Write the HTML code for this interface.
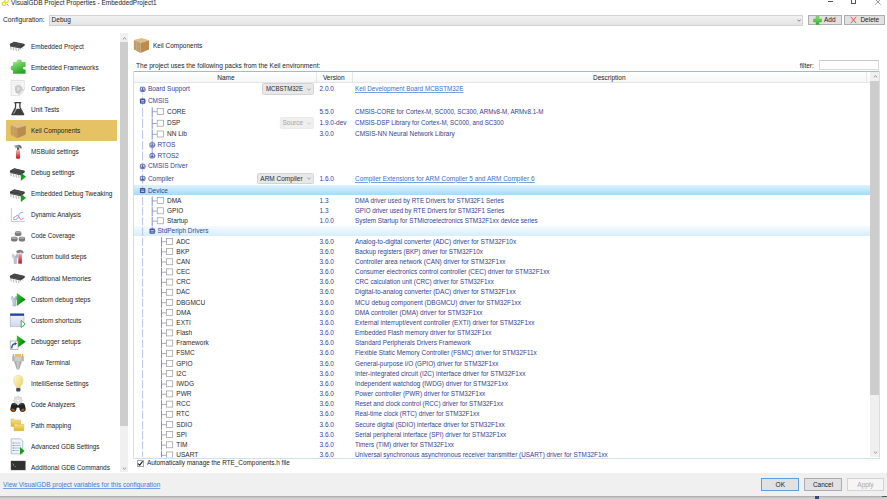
<!DOCTYPE html><html><head><meta charset="utf-8"><style>
html,body{margin:0;padding:0;width:887px;height:499px;overflow:hidden;background:#fff}
body{position:relative;font-family:"Liberation Sans",sans-serif;font-size:6.5px}
.t{position:absolute;white-space:pre;line-height:10px;}
.r{position:absolute}
.ic{position:absolute;width:16px;height:12px}
.exp{position:absolute;width:5.4px;height:5.4px;background:#3d4f95;border-radius:0.8px}
.exp .h{position:absolute;left:1.2px;top:2.3px;width:3px;height:0.9px;background:#fff}
.exp .v{position:absolute;left:2.25px;top:1.2px;width:0.9px;height:3px;background:#fff}
</style></head><body>
<svg class="r" style="left:0;top:0" width="12" height="8" viewBox="0 0 12 8"><circle cx="3.9" cy="3.9" r="1.7" fill="none" stroke="#e6d92e" stroke-width="1.2"/><circle cx="6.6" cy="0.9" r="1.7" fill="none" stroke="#e6d92e" stroke-width="1.2"/><path d="M7 4.2 L8.6 5.6" stroke="#6a6a6a" stroke-width="0.8"/></svg>
<div class="t" style="left:11px;top:-2.3px;color:#222;transform:scaleX(0.9959);transform-origin:0 0;">VisualGDB Project Properties - EmbeddedProject1</div>
<div class="r" style="left:828px;top:1.2px;width:5px;height:0.7px;background:#555"></div>
<div class="r" style="left:851.2px;top:-1px;width:5px;height:5.4px;border:0.7px solid #555;box-sizing:border-box"></div>
<svg class="r" style="left:875px;top:-1px" width="6" height="6" viewBox="0 0 6 6"><path d="M0.2 0.2L5.6 5.6M5.6 0.2L0.2 5.6" stroke="#555" stroke-width="0.65"/></svg>
<div class="t" style="left:2.5px;top:15px;color:#222;transform:scaleX(1.0251);transform-origin:0 0;">Configuration:</div>
<div class="r" style="left:49.1px;top:14.8px;width:753.7px;height:10.8px;border:1px solid #d2d2d2;box-sizing:border-box;background:linear-gradient(#f1f1f1,#e4e4e4)"></div>
<div class="t" style="left:51.6px;top:15px;color:#222;">Debug</div>
<svg class="r" style="left:797px;top:19px" width="4" height="3" viewBox="0 0 4 3"><path d="M0.3 0.5L2 2.3L3.7 0.5" stroke="#555" stroke-width="0.7" fill="none"/></svg>
<div class="r" style="left:808px;top:15px;width:34px;height:10px;border:1px solid #adadad;box-sizing:border-box;background:#e1e1e1"></div>
<svg class="r" style="left:813px;top:16px" width="9" height="9" viewBox="0 0 9 9"><defs><linearGradient id="gadd" x1="0" y1="0" x2="0" y2="1"><stop offset="0" stop-color="#8fe07a"/><stop offset="1" stop-color="#2fae2a"/></linearGradient></defs><path d="M3 0.5h3v2.5h2.5v3h-2.5v2.5h-3v-2.5h-2.5v-3h2.5z" fill="url(#gadd)" stroke="#3aa73a" stroke-width="0.4" stroke-linejoin="round"/></svg>
<div class="t" style="left:824px;top:15px;color:#222;">Add</div>
<div class="r" style="left:844px;top:15px;width:41px;height:10px;border:1px solid #adadad;box-sizing:border-box;background:#e1e1e1"></div>
<svg class="r" style="left:850px;top:16px" width="7" height="8" viewBox="0 0 7 8"><path d="M0.8 0.8L6.2 7.2M6.2 0.8L0.8 7.2" stroke="#ea4b35" stroke-width="0.9"/></svg>
<div class="t" style="left:860.4px;top:15px;color:#222;">Delete</div>
<div class="t" style="left:31.2px;top:41.9px;color:#222;transform:scaleX(0.9891);transform-origin:0 0;">Embedded Project</div>
<div class="t" style="left:31.2px;top:62.900000000000006px;color:#222;transform:scaleX(0.9797);transform-origin:0 0;">Embedded Frameworks</div>
<div class="t" style="left:31.2px;top:84.0px;color:#222;transform:scaleX(0.9944);transform-origin:0 0;">Configuration Files</div>
<div class="t" style="left:31.2px;top:105.0px;color:#222;transform:scaleX(0.9957);transform-origin:0 0;">Unit Tests</div>
<div class="r" style="left:6px;top:120.2px;width:111px;height:21px;background:#e5c365"></div>
<div class="t" style="left:31.2px;top:126.1px;color:#222;transform:scaleX(0.996);transform-origin:0 0;">Keil Components</div>
<div class="t" style="left:31.2px;top:147.2px;color:#222;transform:scaleX(0.9872);transform-origin:0 0;">MSBuild settings</div>
<div class="t" style="left:31.2px;top:168.2px;color:#222;transform:scaleX(1.0052);transform-origin:0 0;">Debug settings</div>
<div class="t" style="left:31.2px;top:189.2px;color:#222;transform:scaleX(0.998);transform-origin:0 0;">Embedded Debug Tweaking</div>
<div class="t" style="left:31.2px;top:210.3px;color:#222;transform:scaleX(0.9796);transform-origin:0 0;">Dynamic Analysis</div>
<div class="t" style="left:31.2px;top:231.3px;color:#222;transform:scaleX(0.9664);transform-origin:0 0;">Code Coverage</div>
<div class="t" style="left:31.2px;top:252.39999999999998px;color:#222;transform:scaleX(1.0058);transform-origin:0 0;">Custom build steps</div>
<div class="t" style="left:31.2px;top:273.5px;color:#222;transform:scaleX(1.0222);transform-origin:0 0;">Additional Memories</div>
<div class="t" style="left:31.2px;top:294.5px;color:#222;transform:scaleX(0.9962);transform-origin:0 0;">Custom debug steps</div>
<div class="t" style="left:31.2px;top:315.6px;color:#222;transform:scaleX(0.9945);transform-origin:0 0;">Custom shortcuts</div>
<div class="t" style="left:31.2px;top:336.6px;color:#222;transform:scaleX(1.0037);transform-origin:0 0;">Debugger setups</div>
<div class="t" style="left:31.2px;top:357.7px;color:#222;transform:scaleX(0.9907);transform-origin:0 0;">Raw Terminal</div>
<div class="t" style="left:31.2px;top:378.7px;color:#222;transform:scaleX(0.9778);transform-origin:0 0;">IntelliSense Settings</div>
<div class="t" style="left:31.2px;top:399.8px;color:#222;transform:scaleX(0.9708);transform-origin:0 0;">Code Analyzers</div>
<div class="t" style="left:31.2px;top:420.8px;color:#222;transform:scaleX(0.9994);transform-origin:0 0;">Path mapping</div>
<div class="t" style="left:31.2px;top:441.9px;color:#222;transform:scaleX(0.9756);transform-origin:0 0;">Advanced GDB Settings</div>
<div class="t" style="left:31.2px;top:462.9px;color:#222;transform:scaleX(0.9926);transform-origin:0 0;">Additional GDB Commands</div>
<div class="r" style="left:119.7px;top:33.1px;width:8.2px;height:439.4px;background:#f0f0f0"></div>
<div class="r" style="left:119.7px;top:41.8px;width:8.2px;height:384.4px;background:#cdcdcd"></div>
<svg class="r" style="left:121.5px;top:36.5px" width="5" height="3" viewBox="0 0 5 3"><path d="M0.8 2.4L2.5 0.8L4.2 2.4" stroke="#7a7a7a" stroke-width="0.8" fill="none"/></svg>
<svg class="r" style="left:121.5px;top:466.5px" width="5" height="3" viewBox="0 0 5 3"><path d="M0.8 0.6L2.5 2.2L4.2 0.6" stroke="#7a7a7a" stroke-width="0.8" fill="none"/></svg>
<div class="t" style="left:152.6px;top:41.1px;color:#222;transform:scaleX(0.996);transform-origin:0 0;">Keil Components</div>
<div class="t" style="left:136.4px;top:60.900000000000006px;color:#222;transform:scaleX(1.0101);transform-origin:0 0;">The project uses the following packs from the Keil environment:</div>
<div class="t" style="left:799.7px;top:60.7px;color:#222;">filter:</div>
<div class="r" style="left:819.2px;top:59.6px;width:60.3px;height:10.8px;border:1px solid #dadada;border-top-color:#c8c8c8;box-sizing:border-box;background:#fff"></div>
<div class="r" style="left:133.4px;top:71.0px;width:746.2px;height:387.6px;border:1px solid #cfe0ef;border-top-color:#9fbad6;border-radius:1.5px;box-sizing:border-box;background:#fff"></div>
<div class="r" style="left:134.4px;top:72.0px;width:735.8px;height:10.7px;background:linear-gradient(#ffffff,#f6f7f8);border-bottom:1px solid #e6e6e6;box-sizing:border-box"></div>
<div class="r" style="left:316.3px;top:72.4px;width:0.8px;height:10px;background:#e6e6e6"></div>
<div class="r" style="left:351.5px;top:72.4px;width:0.8px;height:10px;background:#e6e6e6"></div>
<div class="r" style="left:865.9px;top:72.4px;width:0.8px;height:10px;background:#e6e6e6"></div>
<div class="t" style="left:217.3px;top:72.7px;color:#222;">Name</div>
<div class="t" style="left:322.9px;top:72.7px;color:#222;">Version</div>
<div class="t" style="left:593px;top:72.7px;color:#222;">Description</div>
<div class="r" style="left:870.2px;top:72.4px;width:8.6px;height:384.6px;background:#f0f0f0"></div>
<div class="r" style="left:870.2px;top:81px;width:8.6px;height:314px;background:#cdcdcd"></div>
<svg class="r" style="left:872.5px;top:75px" width="5" height="3" viewBox="0 0 5 3"><path d="M0.8 2.4L2.5 0.8L4.2 2.4" stroke="#7a7a7a" stroke-width="0.8" fill="none"/></svg>
<svg class="r" style="left:872.5px;top:451px" width="5" height="3" viewBox="0 0 5 3"><path d="M0.8 0.6L2.5 2.2L4.2 0.6" stroke="#7a7a7a" stroke-width="0.8" fill="none"/></svg>
<div class="r" style="left:134.4px;top:184.7px;width:735.8px;height:10.4px;background:linear-gradient(#def3fd,#a2daf8)"></div>
<div class="r" style="left:134.4px;top:225.8px;width:735.8px;height:10.6px;background:linear-gradient(#f5fbfe,#d6eefc)"></div>
<div class="t" style="left:147.9px;top:84.4px;color:#34458f;">Board Support</div>
<div class="r" style="left:262.20000000000005px;top:83.4px;width:51.4px;height:11.2px;border-radius:1.5px;background:#e8e8e8;border:0.6px solid #d4d4d4;box-sizing:border-box"></div>
<div class="t" style="left:265.6px;top:84.4px;color:#2a2a2a;transform:scaleX(0.93);transform-origin:0 0">MCBSTM32E</div>
<svg class="r" style="left:307px;top:87.6px" width="4" height="3" viewBox="0 0 4 3"><path d="M0.3 0.5L2 2.3L3.7 0.5" stroke="#777" stroke-width="0.6" fill="none"/></svg>
<div class="t" style="left:319.5px;top:84.4px;color:#34428f;">2.0.0</div>
<div class="t" style="left:354.5px;top:84.4px;color:#3571cd;text-decoration:underline;text-decoration-color:#76a2e2;transform:scaleX(0.9719);transform-origin:0 0">Keil Development Board MCBSTM32E</div>
<div class="t" style="left:147.9px;top:96.1px;color:#34458f;">CMSIS</div>
<div class="t" style="left:167.0px;top:106.6px;color:#2a2a2a;">CORE</div>
<div class="t" style="left:319.5px;top:106.6px;color:#34428f;">5.5.0</div>
<div class="t" style="left:354.5px;top:106.6px;color:#34428f;transform:scaleX(0.9605);transform-origin:0 0">CMSIS-CORE for Cortex-M, SC000, SC300, ARMv8-M, ARMv8.1-M</div>
<div class="t" style="left:167.0px;top:118.4px;color:#2a2a2a;">DSP</div>
<div class="r" style="left:279.5px;top:117.1px;width:34.1px;height:11.5px;border-radius:1.5px;background:#efefef;border:0.6px solid #ececec;box-sizing:border-box"></div>
<div class="t" style="left:282.5px;top:118.4px;color:#a5a5a5;">Source</div>
<svg class="r" style="left:307px;top:121.6px" width="4" height="3" viewBox="0 0 4 3"><path d="M0.3 0.5L2 2.3L3.7 0.5" stroke="#bbb" stroke-width="0.6" fill="none"/></svg>
<div class="t" style="left:319.5px;top:118.4px;color:#34428f;">1.9.0-dev</div>
<div class="t" style="left:354.5px;top:118.4px;color:#34428f;transform:scaleX(0.958);transform-origin:0 0">CMSIS-DSP Library for Cortex-M, SC000, and SC300</div>
<div class="t" style="left:167.0px;top:129.2px;color:#2a2a2a;">NN Lib</div>
<div class="t" style="left:319.5px;top:129.2px;color:#34428f;">3.0.0</div>
<div class="t" style="left:354.5px;top:129.2px;color:#34428f;transform:scaleX(0.9938);transform-origin:0 0">CMSIS-NN Neural Network Library</div>
<div class="t" style="left:157.5px;top:140px;color:#34458f;">RTOS</div>
<div class="t" style="left:157.5px;top:150.8px;color:#34458f;">RTOS2</div>
<div class="t" style="left:147.9px;top:161.4px;color:#34458f;">CMSIS Driver</div>
<div class="t" style="left:147.9px;top:173.5px;color:#34458f;">Compiler</div>
<div class="r" style="left:256.90000000000003px;top:172.5px;width:56.7px;height:11.2px;border-radius:1.5px;background:#e8e8e8;border:0.6px solid #d4d4d4;box-sizing:border-box"></div>
<div class="t" style="left:260.3px;top:173.5px;color:#2a2a2a;">ARM Compiler</div>
<svg class="r" style="left:307px;top:176.7px" width="4" height="3" viewBox="0 0 4 3"><path d="M0.3 0.5L2 2.3L3.7 0.5" stroke="#777" stroke-width="0.6" fill="none"/></svg>
<div class="t" style="left:319.5px;top:173.5px;color:#34428f;">1.6.0</div>
<div class="t" style="left:354.5px;top:173.5px;color:#3571cd;text-decoration:underline;text-decoration-color:#76a2e2;transform:scaleX(0.9977);transform-origin:0 0">Compiler Extensions for ARM Compiler 5 and ARM Compiler 6</div>
<div class="t" style="left:147.9px;top:185.5px;color:#34458f;">Device</div>
<div class="t" style="left:167.0px;top:195.8px;color:#2a2a2a;">DMA</div>
<div class="t" style="left:319.5px;top:195.8px;color:#34428f;">1.3</div>
<div class="t" style="left:354.5px;top:195.8px;color:#34428f;transform:scaleX(0.9677);transform-origin:0 0">DMA driver used by RTE Drivers for STM32F1 Series</div>
<div class="t" style="left:167.0px;top:206px;color:#2a2a2a;">GPIO</div>
<div class="t" style="left:319.5px;top:206px;color:#34428f;">1.3</div>
<div class="t" style="left:354.5px;top:206px;color:#34428f;transform:scaleX(0.9587);transform-origin:0 0">GPIO driver used by RTE Drivers for STM32F1 Series</div>
<div class="t" style="left:167.0px;top:216px;color:#2a2a2a;">Startup</div>
<div class="t" style="left:319.5px;top:216px;color:#34428f;">1.0.0</div>
<div class="t" style="left:354.5px;top:216px;color:#34428f;transform:scaleX(0.9739);transform-origin:0 0">System Startup for STMicroelectronics STM32F1xx device series</div>
<div class="t" style="left:157.5px;top:226.1px;color:#34458f;">StdPeriph Drivers</div>
<div class="t" style="left:176.3px;top:236.6px;color:#2a2a2a;">ADC</div>
<div class="t" style="left:319.5px;top:236.6px;color:#34428f;">3.6.0</div>
<div class="t" style="left:354.5px;top:236.6px;color:#34428f;transform:scaleX(1.005);transform-origin:0 0">Analog-to-digital converter (ADC) driver for STM32F10x</div>
<div class="t" style="left:176.3px;top:246.77px;color:#2a2a2a;">BKP</div>
<div class="t" style="left:319.5px;top:246.77px;color:#34428f;">3.6.0</div>
<div class="t" style="left:354.5px;top:246.77px;color:#34428f;transform:scaleX(0.9681);transform-origin:0 0">Backup registers (BKP) driver for STM32F10x</div>
<div class="t" style="left:176.3px;top:256.94px;color:#2a2a2a;">CAN</div>
<div class="t" style="left:319.5px;top:256.94px;color:#34428f;">3.6.0</div>
<div class="t" style="left:354.5px;top:256.94px;color:#34428f;transform:scaleX(0.9926);transform-origin:0 0">Controller area network (CAN) driver for STM32F1xx</div>
<div class="t" style="left:176.3px;top:267.11px;color:#2a2a2a;">CEC</div>
<div class="t" style="left:319.5px;top:267.11px;color:#34428f;">3.6.0</div>
<div class="t" style="left:354.5px;top:267.11px;color:#34428f;transform:scaleX(0.9884);transform-origin:0 0">Consumer electronics control controller (CEC) driver for STM32F1xx</div>
<div class="t" style="left:176.3px;top:277.28px;color:#2a2a2a;">CRC</div>
<div class="t" style="left:319.5px;top:277.28px;color:#34428f;">3.6.0</div>
<div class="t" style="left:354.5px;top:277.28px;color:#34428f;transform:scaleX(0.9686);transform-origin:0 0">CRC calculation unit (CRC) driver for STM32F1xx</div>
<div class="t" style="left:176.3px;top:287.45px;color:#2a2a2a;">DAC</div>
<div class="t" style="left:319.5px;top:287.45px;color:#34428f;">3.6.0</div>
<div class="t" style="left:354.5px;top:287.45px;color:#34428f;transform:scaleX(1.0019);transform-origin:0 0">Digital-to-analog converter (DAC) driver for STM32F1xx</div>
<div class="t" style="left:176.3px;top:297.62px;color:#2a2a2a;">DBGMCU</div>
<div class="t" style="left:319.5px;top:297.62px;color:#34428f;">3.6.0</div>
<div class="t" style="left:354.5px;top:297.62px;color:#34428f;transform:scaleX(0.9877);transform-origin:0 0">MCU debug component (DBGMCU) driver for STM32F1xx</div>
<div class="t" style="left:176.3px;top:307.79px;color:#2a2a2a;">DMA</div>
<div class="t" style="left:319.5px;top:307.79px;color:#34428f;">3.6.0</div>
<div class="t" style="left:354.5px;top:307.79px;color:#34428f;transform:scaleX(1.0008);transform-origin:0 0">DMA controller (DMA) driver for STM32F1xx</div>
<div class="t" style="left:176.3px;top:317.96px;color:#2a2a2a;">EXTI</div>
<div class="t" style="left:319.5px;top:317.96px;color:#34428f;">3.6.0</div>
<div class="t" style="left:354.5px;top:317.96px;color:#34428f;transform:scaleX(0.9938);transform-origin:0 0">External interrupt/event controller (EXTI) driver for STM32F1xx</div>
<div class="t" style="left:176.3px;top:328.13px;color:#2a2a2a;">Flash</div>
<div class="t" style="left:319.5px;top:328.13px;color:#34428f;">3.6.0</div>
<div class="t" style="left:354.5px;top:328.13px;color:#34428f;transform:scaleX(0.9833);transform-origin:0 0">Embedded Flash memory driver for STM32F1xx</div>
<div class="t" style="left:176.3px;top:338.3px;color:#2a2a2a;">Framework</div>
<div class="t" style="left:319.5px;top:338.3px;color:#34428f;">3.6.0</div>
<div class="t" style="left:354.5px;top:338.3px;color:#34428f;transform:scaleX(0.9816);transform-origin:0 0">Standard Peripherals Drivers Framework</div>
<div class="t" style="left:176.3px;top:348.47px;color:#2a2a2a;">FSMC</div>
<div class="t" style="left:319.5px;top:348.47px;color:#34428f;">3.6.0</div>
<div class="t" style="left:354.5px;top:348.47px;color:#34428f;transform:scaleX(0.9851);transform-origin:0 0">Flexible Static Memory Controller (FSMC) driver for STM32F11x</div>
<div class="t" style="left:176.3px;top:358.64px;color:#2a2a2a;">GPIO</div>
<div class="t" style="left:319.5px;top:358.64px;color:#34428f;">3.6.0</div>
<div class="t" style="left:354.5px;top:358.64px;color:#34428f;transform:scaleX(0.9826);transform-origin:0 0">General-purpose I/O (GPIO) driver for STM32F1xx</div>
<div class="t" style="left:176.3px;top:368.81px;color:#2a2a2a;">I2C</div>
<div class="t" style="left:319.5px;top:368.81px;color:#34428f;">3.6.0</div>
<div class="t" style="left:354.5px;top:368.81px;color:#34428f;transform:scaleX(1.0015);transform-origin:0 0">Inter-integrated circuit (I2C) interface driver for STM32F1xx</div>
<div class="t" style="left:176.3px;top:378.98px;color:#2a2a2a;">IWDG</div>
<div class="t" style="left:319.5px;top:378.98px;color:#34428f;">3.6.0</div>
<div class="t" style="left:354.5px;top:378.98px;color:#34428f;transform:scaleX(0.9935);transform-origin:0 0">Independent watchdog (IWDG) driver for STM32F1xx</div>
<div class="t" style="left:176.3px;top:389.15px;color:#2a2a2a;">PWR</div>
<div class="t" style="left:319.5px;top:389.15px;color:#34428f;">3.6.0</div>
<div class="t" style="left:354.5px;top:389.15px;color:#34428f;transform:scaleX(0.9829);transform-origin:0 0">Power controller (PWR) driver for STM32F1xx</div>
<div class="t" style="left:176.3px;top:399.32px;color:#2a2a2a;">RCC</div>
<div class="t" style="left:319.5px;top:399.32px;color:#34428f;">3.6.0</div>
<div class="t" style="left:354.5px;top:399.32px;color:#34428f;transform:scaleX(0.9745);transform-origin:0 0">Reset and clock control (RCC) driver for STM32F1xx</div>
<div class="t" style="left:176.3px;top:409.49px;color:#2a2a2a;">RTC</div>
<div class="t" style="left:319.5px;top:409.49px;color:#34428f;">3.6.0</div>
<div class="t" style="left:354.5px;top:409.49px;color:#34428f;transform:scaleX(0.9703);transform-origin:0 0">Real-time clock (RTC) driver for STM32F1xx</div>
<div class="t" style="left:176.3px;top:419.66px;color:#2a2a2a;">SDIO</div>
<div class="t" style="left:319.5px;top:419.66px;color:#34428f;">3.6.0</div>
<div class="t" style="left:354.5px;top:419.66px;color:#34428f;transform:scaleX(0.9826);transform-origin:0 0">Secure digital (SDIO) interface driver for STM32F1xx</div>
<div class="t" style="left:176.3px;top:429.83px;color:#2a2a2a;">SPI</div>
<div class="t" style="left:319.5px;top:429.83px;color:#34428f;">3.6.0</div>
<div class="t" style="left:354.5px;top:429.83px;color:#34428f;transform:scaleX(0.9762);transform-origin:0 0">Serial peripheral interface (SPI) driver for STM32F1xx</div>
<div class="t" style="left:176.3px;top:440.0px;color:#2a2a2a;">TIM</div>
<div class="t" style="left:319.5px;top:440.0px;color:#34428f;">3.6.0</div>
<div class="t" style="left:354.5px;top:440.0px;color:#34428f;transform:scaleX(0.9778);transform-origin:0 0">Timers (TIM) driver for STM32F1xx</div>
<div class="t" style="left:176.3px;top:450.17px;color:#2a2a2a;">USART</div>
<div class="t" style="left:319.5px;top:450.17px;color:#34428f;">3.6.0</div>
<div class="t" style="left:354.5px;top:450.17px;color:#34428f;transform:scaleX(0.9806);transform-origin:0 0">Universal synchronous asynchronous receiver transmitter (USART) driver for STM32F1xx</div>
<svg class="r" style="left:0;top:0" width="887" height="499" viewBox="0 0 887 499"><defs><clipPath id="lc"><rect x="135" y="82" width="735" height="375.6"/></clipPath></defs><g clip-path="url(#lc)"><path d="M142.6 92.7V94.55" stroke="#b3bcdf" stroke-width="0.9"/><path d="M142.6 96.55V105.65" stroke="#b3bcdf" stroke-width="0.9"/><path d="M142.6 107.65V116.8" stroke="#b3bcdf" stroke-width="0.9"/><path d="M142.6 118.8V128.1" stroke="#b3bcdf" stroke-width="0.9"/><path d="M142.6 130.1V138.9" stroke="#b3bcdf" stroke-width="0.9"/><path d="M142.6 140.9V149.7" stroke="#b3bcdf" stroke-width="0.9"/><path d="M142.6 151.7V160.4" stroke="#b3bcdf" stroke-width="0.9"/><path d="M142.6 162.4V171.75" stroke="#b3bcdf" stroke-width="0.9"/><path d="M142.6 173.75V183.8" stroke="#b3bcdf" stroke-width="0.9"/><path d="M142.6 185.8V194.95" stroke="#b3bcdf" stroke-width="0.9"/><path d="M142.6 196.95V205.2" stroke="#b3bcdf" stroke-width="0.9"/><path d="M142.6 207.2V215.3" stroke="#b3bcdf" stroke-width="0.9"/><path d="M142.6 217.3V225.35" stroke="#b3bcdf" stroke-width="0.9"/><path d="M142.6 227.35V235.65" stroke="#b3bcdf" stroke-width="0.9"/><path d="M142.6 237.65V245.99" stroke="#b3bcdf" stroke-width="0.9"/><path d="M142.6 247.99V256.16" stroke="#b3bcdf" stroke-width="0.9"/><path d="M142.6 258.16V266.32" stroke="#b3bcdf" stroke-width="0.9"/><path d="M142.6 268.32V276.5" stroke="#b3bcdf" stroke-width="0.9"/><path d="M142.6 278.5V286.67" stroke="#b3bcdf" stroke-width="0.9"/><path d="M142.6 288.67V296.83" stroke="#b3bcdf" stroke-width="0.9"/><path d="M142.6 298.83V307.01" stroke="#b3bcdf" stroke-width="0.9"/><path d="M142.6 309.01V317.18" stroke="#b3bcdf" stroke-width="0.9"/><path d="M142.6 319.18V327.34" stroke="#b3bcdf" stroke-width="0.9"/><path d="M142.6 329.34V337.52" stroke="#b3bcdf" stroke-width="0.9"/><path d="M142.6 339.52V347.69" stroke="#b3bcdf" stroke-width="0.9"/><path d="M142.6 349.69V357.86" stroke="#b3bcdf" stroke-width="0.9"/><path d="M142.6 359.86V368.03" stroke="#b3bcdf" stroke-width="0.9"/><path d="M142.6 370.03V378.19" stroke="#b3bcdf" stroke-width="0.9"/><path d="M142.6 380.19V388.37" stroke="#b3bcdf" stroke-width="0.9"/><path d="M142.6 390.37V398.54" stroke="#b3bcdf" stroke-width="0.9"/><path d="M142.6 400.54V408.7" stroke="#b3bcdf" stroke-width="0.9"/><path d="M142.6 410.7V418.88" stroke="#b3bcdf" stroke-width="0.9"/><path d="M142.6 420.88V429.05" stroke="#b3bcdf" stroke-width="0.9"/><path d="M142.6 431.05V439.21" stroke="#b3bcdf" stroke-width="0.9"/><path d="M142.6 441.21V449.39" stroke="#b3bcdf" stroke-width="0.9"/><path d="M142.6 451.39V456.8" stroke="#b3bcdf" stroke-width="0.9"/><path d="M152.2 107.25V117.6" stroke="#7585c2" stroke-width="0.9"/><path d="M152.2 118.4V128.9" stroke="#7585c2" stroke-width="0.9"/><path d="M152.2 129.7V139.7" stroke="#7585c2" stroke-width="0.9"/><path d="M152.2 140.5V150.5" stroke="#7585c2" stroke-width="0.9"/><path d="M152.2 151.3V155.9" stroke="#7585c2" stroke-width="0.9"/><path d="M152.2 196.55V206.0" stroke="#7585c2" stroke-width="0.9"/><path d="M152.2 206.8V216.1" stroke="#7585c2" stroke-width="0.9"/><path d="M152.2 216.9V226.15" stroke="#7585c2" stroke-width="0.9"/><path d="M152.2 226.95V231.2" stroke="#7585c2" stroke-width="0.9"/><path d="M161.5 237.25V246.78" stroke="#7585c2" stroke-width="0.9"/><path d="M161.5 247.59V256.96" stroke="#7585c2" stroke-width="0.9"/><path d="M161.5 257.75V267.12" stroke="#7585c2" stroke-width="0.9"/><path d="M161.5 267.92V277.3" stroke="#7585c2" stroke-width="0.9"/><path d="M161.5 278.09V287.47" stroke="#7585c2" stroke-width="0.9"/><path d="M161.5 288.26V297.63" stroke="#7585c2" stroke-width="0.9"/><path d="M161.5 298.43V307.81" stroke="#7585c2" stroke-width="0.9"/><path d="M161.5 308.61V317.98" stroke="#7585c2" stroke-width="0.9"/><path d="M161.5 318.77V328.14" stroke="#7585c2" stroke-width="0.9"/><path d="M161.5 328.94V338.32" stroke="#7585c2" stroke-width="0.9"/><path d="M161.5 339.12V348.49" stroke="#7585c2" stroke-width="0.9"/><path d="M161.5 349.28V358.66" stroke="#7585c2" stroke-width="0.9"/><path d="M161.5 359.45V368.83" stroke="#7585c2" stroke-width="0.9"/><path d="M161.5 369.62V379.0" stroke="#7585c2" stroke-width="0.9"/><path d="M161.5 379.79V389.17" stroke="#7585c2" stroke-width="0.9"/><path d="M161.5 389.96V399.34" stroke="#7585c2" stroke-width="0.9"/><path d="M161.5 400.13V409.5" stroke="#7585c2" stroke-width="0.9"/><path d="M161.5 410.3V419.68" stroke="#7585c2" stroke-width="0.9"/><path d="M161.5 420.48V429.85" stroke="#7585c2" stroke-width="0.9"/><path d="M161.5 430.64V440.01" stroke="#7585c2" stroke-width="0.9"/><path d="M161.5 440.81V450.19" stroke="#7585c2" stroke-width="0.9"/><path d="M161.5 450.99V457.6" stroke="#7585c2" stroke-width="0.9"/><rect x="140.35" y="87.25" width="4.5" height="4.3" rx="0.8" fill="#d5dbf0" stroke="#5263aa" stroke-width="0.9"/><path d="M141.20000000000002 90.3H144.0M142.6 88.0V90.3" stroke="#3a4b98" stroke-width="0.9"/><path d="M145.20000000000002 88.3L146.4 89.4L145.20000000000002 90.5" fill="#8e9ad0"/><rect x="139.9" y="98.5" width="5.4" height="5.2" rx="0.9" fill="#4253a0"/><path d="M141.0 100.5H144.20000000000002M141.0 102.1H144.20000000000002" stroke="#e8ecf8" stroke-width="0.7"/><path d="M145.20000000000002 100.0L146.4 101.1L145.20000000000002 102.2" fill="#8e9ad0"/><rect x="157.20000000000002" y="108.4" width="6.2" height="6.0" fill="#fff" stroke="#9a9a9a" stroke-width="0.7"/><path d="M152.2 111.7H156.9" stroke="#8392cc" stroke-width="0.8"/><rect x="157.20000000000002" y="120.2" width="6.2" height="6.0" fill="#fff" stroke="#9a9a9a" stroke-width="0.7"/><path d="M152.2 123.5H156.9" stroke="#8392cc" stroke-width="0.8"/><rect x="157.20000000000002" y="131.0" width="6.2" height="6.0" fill="#fff" stroke="#9a9a9a" stroke-width="0.7"/><path d="M152.2 134.3H156.9" stroke="#8392cc" stroke-width="0.8"/><rect x="149.95" y="142.85" width="4.5" height="4.3" rx="0.8" fill="#d5dbf0" stroke="#5263aa" stroke-width="0.9"/><path d="M150.8 145.9H153.6M152.2 143.6V145.9" stroke="#3a4b98" stroke-width="0.9"/><path d="M154.8 143.9L156.0 145.0L154.8 146.1" fill="#8e9ad0"/><rect x="149.95" y="153.65" width="4.5" height="4.3" rx="0.8" fill="#d5dbf0" stroke="#5263aa" stroke-width="0.9"/><path d="M150.8 156.7H153.6M152.2 154.4V156.7" stroke="#3a4b98" stroke-width="0.9"/><path d="M154.8 154.7L156.0 155.8L154.8 156.9" fill="#8e9ad0"/><rect x="140.35" y="164.25" width="4.5" height="4.3" rx="0.8" fill="#d5dbf0" stroke="#5263aa" stroke-width="0.9"/><path d="M141.20000000000002 167.3H144.0M142.6 165.0V167.3" stroke="#3a4b98" stroke-width="0.9"/><path d="M145.20000000000002 165.3L146.4 166.4L145.20000000000002 167.5" fill="#8e9ad0"/><rect x="140.35" y="176.35" width="4.5" height="4.3" rx="0.8" fill="#d5dbf0" stroke="#5263aa" stroke-width="0.9"/><path d="M141.20000000000002 179.4H144.0M142.6 177.1V179.4" stroke="#3a4b98" stroke-width="0.9"/><path d="M145.20000000000002 177.4L146.4 178.5L145.20000000000002 179.6" fill="#8e9ad0"/><rect x="139.9" y="187.9" width="5.4" height="5.2" rx="0.9" fill="#4253a0"/><path d="M141.0 189.9H144.20000000000002M141.0 191.5H144.20000000000002" stroke="#e8ecf8" stroke-width="0.7"/><path d="M145.20000000000002 189.4L146.4 190.5L145.20000000000002 191.6" fill="#8e9ad0"/><rect x="157.20000000000002" y="197.6" width="6.2" height="6.0" fill="#fff" stroke="#9a9a9a" stroke-width="0.7"/><path d="M152.2 200.9H156.9" stroke="#8392cc" stroke-width="0.8"/><rect x="157.20000000000002" y="207.8" width="6.2" height="6.0" fill="#fff" stroke="#9a9a9a" stroke-width="0.7"/><path d="M152.2 211.1H156.9" stroke="#8392cc" stroke-width="0.8"/><rect x="157.20000000000002" y="217.8" width="6.2" height="6.0" fill="#fff" stroke="#9a9a9a" stroke-width="0.7"/><path d="M152.2 221.1H156.9" stroke="#8392cc" stroke-width="0.8"/><rect x="149.5" y="228.5" width="5.4" height="5.2" rx="0.9" fill="#4253a0"/><path d="M150.6 230.5H153.8M150.6 232.1H153.8" stroke="#e8ecf8" stroke-width="0.7"/><path d="M154.8 230.0L156.0 231.1L154.8 232.2" fill="#8e9ad0"/><rect x="166.50000000000003" y="238.4" width="6.2" height="6.0" fill="#fff" stroke="#9a9a9a" stroke-width="0.7"/><path d="M161.5 241.7H166.20000000000002" stroke="#8392cc" stroke-width="0.8"/><rect x="166.50000000000003" y="248.57" width="6.2" height="6.0" fill="#fff" stroke="#9a9a9a" stroke-width="0.7"/><path d="M161.5 251.87H166.20000000000002" stroke="#8392cc" stroke-width="0.8"/><rect x="166.50000000000003" y="258.74" width="6.2" height="6.0" fill="#fff" stroke="#9a9a9a" stroke-width="0.7"/><path d="M161.5 262.04H166.20000000000002" stroke="#8392cc" stroke-width="0.8"/><rect x="166.50000000000003" y="268.91" width="6.2" height="6.0" fill="#fff" stroke="#9a9a9a" stroke-width="0.7"/><path d="M161.5 272.21H166.20000000000002" stroke="#8392cc" stroke-width="0.8"/><rect x="166.50000000000003" y="279.08" width="6.2" height="6.0" fill="#fff" stroke="#9a9a9a" stroke-width="0.7"/><path d="M161.5 282.38H166.20000000000002" stroke="#8392cc" stroke-width="0.8"/><rect x="166.50000000000003" y="289.25" width="6.2" height="6.0" fill="#fff" stroke="#9a9a9a" stroke-width="0.7"/><path d="M161.5 292.55H166.20000000000002" stroke="#8392cc" stroke-width="0.8"/><rect x="166.50000000000003" y="299.42" width="6.2" height="6.0" fill="#fff" stroke="#9a9a9a" stroke-width="0.7"/><path d="M161.5 302.72H166.20000000000002" stroke="#8392cc" stroke-width="0.8"/><rect x="166.50000000000003" y="309.59" width="6.2" height="6.0" fill="#fff" stroke="#9a9a9a" stroke-width="0.7"/><path d="M161.5 312.89H166.20000000000002" stroke="#8392cc" stroke-width="0.8"/><rect x="166.50000000000003" y="319.76" width="6.2" height="6.0" fill="#fff" stroke="#9a9a9a" stroke-width="0.7"/><path d="M161.5 323.06H166.20000000000002" stroke="#8392cc" stroke-width="0.8"/><rect x="166.50000000000003" y="329.93" width="6.2" height="6.0" fill="#fff" stroke="#9a9a9a" stroke-width="0.7"/><path d="M161.5 333.23H166.20000000000002" stroke="#8392cc" stroke-width="0.8"/><rect x="166.50000000000003" y="340.1" width="6.2" height="6.0" fill="#fff" stroke="#9a9a9a" stroke-width="0.7"/><path d="M161.5 343.4H166.20000000000002" stroke="#8392cc" stroke-width="0.8"/><rect x="166.50000000000003" y="350.27" width="6.2" height="6.0" fill="#fff" stroke="#9a9a9a" stroke-width="0.7"/><path d="M161.5 353.57H166.20000000000002" stroke="#8392cc" stroke-width="0.8"/><rect x="166.50000000000003" y="360.44" width="6.2" height="6.0" fill="#fff" stroke="#9a9a9a" stroke-width="0.7"/><path d="M161.5 363.74H166.20000000000002" stroke="#8392cc" stroke-width="0.8"/><rect x="166.50000000000003" y="370.61" width="6.2" height="6.0" fill="#fff" stroke="#9a9a9a" stroke-width="0.7"/><path d="M161.5 373.91H166.20000000000002" stroke="#8392cc" stroke-width="0.8"/><rect x="166.50000000000003" y="380.78" width="6.2" height="6.0" fill="#fff" stroke="#9a9a9a" stroke-width="0.7"/><path d="M161.5 384.08H166.20000000000002" stroke="#8392cc" stroke-width="0.8"/><rect x="166.50000000000003" y="390.95" width="6.2" height="6.0" fill="#fff" stroke="#9a9a9a" stroke-width="0.7"/><path d="M161.5 394.25H166.20000000000002" stroke="#8392cc" stroke-width="0.8"/><rect x="166.50000000000003" y="401.12" width="6.2" height="6.0" fill="#fff" stroke="#9a9a9a" stroke-width="0.7"/><path d="M161.5 404.42H166.20000000000002" stroke="#8392cc" stroke-width="0.8"/><rect x="166.50000000000003" y="411.29" width="6.2" height="6.0" fill="#fff" stroke="#9a9a9a" stroke-width="0.7"/><path d="M161.5 414.59H166.20000000000002" stroke="#8392cc" stroke-width="0.8"/><rect x="166.50000000000003" y="421.46" width="6.2" height="6.0" fill="#fff" stroke="#9a9a9a" stroke-width="0.7"/><path d="M161.5 424.76H166.20000000000002" stroke="#8392cc" stroke-width="0.8"/><rect x="166.50000000000003" y="431.63" width="6.2" height="6.0" fill="#fff" stroke="#9a9a9a" stroke-width="0.7"/><path d="M161.5 434.93H166.20000000000002" stroke="#8392cc" stroke-width="0.8"/><rect x="166.50000000000003" y="441.8" width="6.2" height="6.0" fill="#fff" stroke="#9a9a9a" stroke-width="0.7"/><path d="M161.5 445.1H166.20000000000002" stroke="#8392cc" stroke-width="0.8"/><rect x="166.50000000000003" y="451.97" width="6.2" height="6.0" fill="#fff" stroke="#9a9a9a" stroke-width="0.7"/><path d="M161.5 455.27H166.20000000000002" stroke="#8392cc" stroke-width="0.8"/></g></svg>
<div class="r" style="left:137px;top:460.1px;width:6.8px;height:6.6px;border:0.8px solid #a5a5a5;box-sizing:border-box;background:#fff"></div>
<svg class="r" style="left:137px;top:460.1px" width="7" height="7" viewBox="0 0 7 7"><path d="M1.1 3.6L2.7 5.2L5.6 1.4" stroke="#1a1a1a" stroke-width="1.1" fill="none"/></svg>
<div class="t" style="left:146.5px;top:458.1px;color:#222;transform:scaleX(0.9814);transform-origin:0 0;">Automatically manage the RTE_Components.h file</div>
<div class="r" style="left:0px;top:472.5px;width:887px;height:23.2px;background:#f0f0f0"></div>
<div class="t" style="left:2.6px;top:480px;color:#3b7ad6;transform:scaleX(1.0024);transform-origin:0 0;text-decoration:underline;text-decoration-color:#76a2e2">View VisualGDB project variables for this configuration</div>
<div class="r" style="left:761.2px;top:478.3px;width:37.6px;height:13.2px;border:1px solid #5aa0e0;box-sizing:border-box;background:#e1e1e1"></div>
<div class="t" style="left:775.6px;top:479.7px;color:#222;">OK</div>
<div class="r" style="left:804.3px;top:478.3px;width:37.3px;height:13.2px;border:1px solid #adadad;box-sizing:border-box;background:#e1e1e1"></div>
<div class="t" style="left:812.9px;top:479.7px;color:#222;">Cancel</div>
<div class="r" style="left:846.9px;top:478.3px;width:37.6px;height:13.2px;border:1px solid #d3d3d3;box-sizing:border-box;background:#f5f5f5"></div>
<div class="t" style="left:857.3px;top:479.7px;color:#a6a6a6;">Apply</div>
<div class="r" style="left:0px;top:495.6px;width:887px;height:3.4px;background:linear-gradient(#9c9c9c 0,#c4c4c4 35%,#d2d2d2 100%)"></div>
<div class="r" style="left:882px;top:495.6px;width:5px;height:1.2px;background:#555"></div>
<div class="r" style="left:815.4px;top:496.2px;width:4px;height:2.8px;background:#3a4878"></div>
<svg class="r" style="left:0;top:0;z-index:2" width="887" height="499" viewBox="0 0 887 499"><g transform="translate(0,0)">
<path d="M10.6 46.6 L11.2 49.6 M13.2 47.4 L13.8 50.4 M15.8 48.1 L16.4 51 M18.4 48.6 L18.9 51.2" stroke="#b9b9b9" stroke-width="1.1"/>
<path d="M20.5 48.2 L21 50 M22.6 47.2 L23.2 48.8" stroke="#c8c8c8" stroke-width="0.9"/>
<path d="M9.8 44.1 L14.2 41.7 L24.6 44.1 L24.7 45.6 L20.4 48.6 L10.2 46.4 Z" fill="#353535"/>
<path d="M10 44.2 L14.2 42 L24.4 44.3 L20.3 46.6 Z" fill="#4a4a4a"/>
<path d="M10.2 45.6 L20.3 47.6" stroke="#8a8a8a" stroke-width="0.5"/>
</g><defs><linearGradient id="gpz" x1="0" y1="0" x2="0.45" y2="1"><stop offset="0" stop-color="#d2f3ca"/><stop offset="0.45" stop-color="#6fd45e"/><stop offset="1" stop-color="#2ea42a"/></linearGradient>
<linearGradient id="gbox" x1="0" y1="0" x2="1" y2="1"><stop offset="0" stop-color="#d9b97f"/><stop offset="1" stop-color="#b48648"/></linearGradient>
<linearGradient id="gtri" x1="0" y1="0" x2="1" y2="0.6"><stop offset="0" stop-color="#2ecb2e"/><stop offset="0.55" stop-color="#17a017"/><stop offset="1" stop-color="#076d07"/></linearGradient>
<linearGradient id="gfold" x1="0" y1="0" x2="0" y2="1"><stop offset="0" stop-color="#fae590"/><stop offset="1" stop-color="#e0b52a"/></linearGradient>
<linearGradient id="gbulb" x1="0" y1="0" x2="1" y2="1"><stop offset="0" stop-color="#fff7cf"/><stop offset="1" stop-color="#e6cf6a"/></linearGradient>
<linearGradient id="gwin" x1="0" y1="0" x2="0" y2="1"><stop offset="0" stop-color="#f4f6fc"/><stop offset="1" stop-color="#cfd8f0"/></linearGradient>
</defs><path d="M13 62 H16.6 Q16.2 59.2 19.2 59.2 Q22.2 59.2 21.8 62 H25.6 V66.8 Q22.8 66.6 22.8 68.2 Q22.8 69.8 25.6 69.6 V73.8 H13 V70.4 Q10.6 70.6 10.6 68 Q10.6 65.4 13 65.6 Z" fill="url(#gpz)"/><path d="M11.1 80.5 H24.3 V89.4 L18.8 95.5 H11.1 Z" fill="#f7f7f7" stroke="#d2d2d2" stroke-width="0.6"/><path d="M12.2 82.6 H22.5 M12.2 84.6 H21 M12.2 86.6h1.2 M12.2 88.6h1.2 M12.2 90.6h1.2 M12.2 92.6h1.2" stroke="#dedede" stroke-width="0.5"/><path d="M15 86.6 Q17.5 84.6 20.5 85.6 Q22.8 87 22.6 89.8 L19.8 93.6 Q17 94.2 15.6 92.4 Q14.2 89.6 15 86.6 Z" fill="#c6c6c6"/><path d="M16.5 87.4 Q18.8 86.4 20.6 88 Q19.8 90.5 17.6 91.2 Z" fill="#dcdcdc"/><path d="M18.8 95.5 Q19.2 90.6 24.3 89.4 Q22.6 93.6 18.8 95.5 Z" fill="#ececec" stroke="#bdbdbd" stroke-width="0.4"/><path d="M14.3 102.6 H21.2 M15.6 102.8 V107.3 L11.9 114.5 H23.7 L19.9 107.3 V102.8" fill="none" stroke="#3e3e3e" stroke-width="1.3" stroke-linejoin="round"/><path d="M15.2 108.8 L20.4 108.8 L23.3 114.3 L12.3 114.3 Z" fill="#3e3e3e"/><path d="M16.8 104 V108.2 L13.6 113.8" stroke="#f2f2f2" stroke-width="0.6" fill="none"/><g transform="translate(10.6,123.3) scale(1.0)">
<path d="M0.1 1.9 L7.7 0 L15.2 2.1 L6.6 4.6 Z" fill="#dcbd84"/>
<path d="M0.1 1.9 L6.6 4.6 L6.7 14.9 L0.1 11.5 Z" fill="#c59c5e"/>
<path d="M6.6 4.6 L15.2 2.1 L15.2 11.3 L6.7 14.9 Z" fill="#b98b4f"/>
<path d="M2.5 3.1 L2.9 12.6" stroke="#b5b2a8" stroke-width="0.7"/><path d="M2.9 8 L5.2 8.6" stroke="#b5b2a8" stroke-width="0.5"/>
<path d="M6.6 4.6 L15.2 2.1" stroke="#e8d2a6" stroke-width="0.4"/>
</g><g transform="translate(133.8,38.1) scale(1.0)">
<path d="M0.1 1.9 L7.7 0 L15.2 2.1 L6.6 4.6 Z" fill="#dcbd84"/>
<path d="M0.1 1.9 L6.6 4.6 L6.7 14.9 L0.1 11.5 Z" fill="#c59c5e"/>
<path d="M6.6 4.6 L15.2 2.1 L15.2 11.3 L6.7 14.9 Z" fill="#b98b4f"/>
<path d="M2.5 3.1 L2.9 12.6" stroke="#b5b2a8" stroke-width="0.7"/><path d="M2.9 8 L5.2 8.6" stroke="#b5b2a8" stroke-width="0.5"/>
<path d="M6.6 4.6 L15.2 2.1" stroke="#e8d2a6" stroke-width="0.4"/>
</g><defs><linearGradient id="ghan2" x1="0" y1="0" x2="0" y2="1"><stop offset="0" stop-color="#f2c0c0"/><stop offset="0.6" stop-color="#dc5050"/><stop offset="1" stop-color="#c01a1a"/></linearGradient><linearGradient id="ghead" x1="0" y1="0" x2="1" y2="0"><stop offset="0" stop-color="#b0b8c2"/><stop offset="0.6" stop-color="#7d8590"/><stop offset="1" stop-color="#4a525c"/></linearGradient></defs><path d="M14 145.2 L19.5 144.8 Q21.2 145.2 21.9 148.2 L20.4 148.4 L19.6 147.6 L15.6 148.2 Z" fill="url(#ghead)"/><rect x="17" y="147.6" width="2.2" height="2.6" fill="#4f5760"/><rect x="16" y="149.8" width="4.1" height="9" rx="1.2" fill="url(#ghan2)"/><g transform="translate(0.1,126.6)">
<path d="M10.6 46.6 L11.2 49.6 M13.2 47.4 L13.8 50.4 M15.8 48.1 L16.4 51 M18.4 48.6 L18.9 51.2" stroke="#b9b9b9" stroke-width="1.1"/>
<path d="M20.5 48.2 L21 50 M22.6 47.2 L23.2 48.8" stroke="#c8c8c8" stroke-width="0.9"/>
<path d="M9.8 44.1 L14.2 41.7 L24.6 44.1 L24.7 45.6 L20.4 48.6 L10.2 46.4 Z" fill="#353535"/>
<path d="M10 44.2 L14.2 42 L24.4 44.3 L20.3 46.6 Z" fill="#4a4a4a"/>
<path d="M10.2 45.6 L20.3 47.6" stroke="#8a8a8a" stroke-width="0.5"/>
</g><path d="M20.8 172.8 L26.0 176.85000000000002 L20.8 180.9 Z" fill="#169e16"/><g transform="translate(0.1,147.65)">
<path d="M10.6 46.6 L11.2 49.6 M13.2 47.4 L13.8 50.4 M15.8 48.1 L16.4 51 M18.4 48.6 L18.9 51.2" stroke="#b9b9b9" stroke-width="1.1"/>
<path d="M20.5 48.2 L21 50 M22.6 47.2 L23.2 48.8" stroke="#c8c8c8" stroke-width="0.9"/>
<path d="M9.8 44.1 L14.2 41.7 L24.6 44.1 L24.7 45.6 L20.4 48.6 L10.2 46.4 Z" fill="#353535"/>
<path d="M10 44.2 L14.2 42 L24.4 44.3 L20.3 46.6 Z" fill="#4a4a4a"/>
<path d="M10.2 45.6 L20.3 47.6" stroke="#8a8a8a" stroke-width="0.5"/>
</g><path d="M20.8 193.85 L26.0 197.89999999999998 L20.8 201.95 Z" fill="#169e16"/><path d="M11.4 208 V221.5 H24.8" stroke="#b8b8b8" stroke-width="0.7" fill="none"/><path d="M10.8 210.5h0.8M10.8 213.4h0.8M10.8 216.3h0.8M10.8 219.2h0.8" stroke="#c8c8c8" stroke-width="0.4"/><path d="M13 218.4 Q15.5 216.2 17.6 215.2 Q19 216.5 20 218.8 Q21.2 220.2 23.6 218.2" stroke="#e070c0" stroke-width="1.0" fill="none"/><path d="M13.2 219.6 Q16 219.8 17.6 218.6 Q18.6 216 19.4 213.6 Q20.4 212.2 23.2 212.2" stroke="#7fb0f0" stroke-width="1.0" fill="none"/><rect x="14.8" y="231.2" width="6.6" height="4.8" rx="1.8" fill="#7b7b7b"/><rect x="15.4" y="231.7" width="5.4" height="1.6" rx="0.8" fill="#a9a9a9"/><rect x="11.0" y="236.8" width="6.6" height="4.8" rx="1.8" fill="#7b7b7b"/><rect x="11.6" y="237.3" width="5.4" height="1.6" rx="0.8" fill="#a9a9a9"/><rect x="18.8" y="236.8" width="6.3" height="4.8" rx="1.8" fill="#7b7b7b"/><rect x="19.400000000000002" y="237.3" width="5.1" height="1.6" rx="0.8" fill="#a9a9a9"/><defs><linearGradient id="ghan" x1="0" y1="0" x2="0" y2="1"><stop offset="0" stop-color="#f0b0b0"/><stop offset="0.6" stop-color="#d84848"/><stop offset="1" stop-color="#b81818"/></linearGradient><linearGradient id="gwr" x1="0" y1="0" x2="1" y2="0"><stop offset="0" stop-color="#dfe6f0"/><stop offset="1" stop-color="#9eabbf"/></linearGradient></defs><path d="M13.2 253.9 Q12 255 12.3 256.6 Q12.8 258 14 258.3 L14 263.6 L16.4 263.6 L16.4 258.3 Q17.7 257.8 17.9 256.4 Q18 254.9 16.8 253.9 L16.2 256 L14.2 256 Z" fill="url(#gwr)" stroke="#8793a8" stroke-width="0.4"/><path d="M16 251.6 Q17.5 249.6 20.5 249.8 Q22.8 250 23.9 252.8 L22.6 253.6 Q21.6 252.4 20.3 252.6 L17.4 253.4 Z" fill="#7a828c"/><rect x="18.3" y="253.4" width="3.6" height="10.2" fill="url(#ghan)"/><g transform="translate(0.1,231.9)">
<path d="M10.6 46.6 L11.2 49.6 M13.2 47.4 L13.8 50.4 M15.8 48.1 L16.4 51 M18.4 48.6 L18.9 51.2" stroke="#b9b9b9" stroke-width="1.1"/>
<path d="M20.5 48.2 L21 50 M22.6 47.2 L23.2 48.8" stroke="#c8c8c8" stroke-width="0.9"/>
<path d="M9.8 44.1 L14.2 41.7 L24.6 44.1 L24.7 45.6 L20.4 48.6 L10.2 46.4 Z" fill="#353535"/>
<path d="M10 44.2 L14.2 42 L24.4 44.3 L20.3 46.6 Z" fill="#4a4a4a"/>
<path d="M10.2 45.6 L20.3 47.6" stroke="#8a8a8a" stroke-width="0.5"/>
</g><g transform="translate(11,296) scale(1.05)"><path d="M1.2 0 Q-0.1 1.1 0.2 2.4 Q0.7 3.8 1.8 4.2 L1.8 9.6 L4.4 9.6 L4.4 4.2 Q5.6 3.7 5.8 2.3 Q5.9 0.9 4.7 0 L4.1 2 L2.0 2 Z" fill="url(#gwr)" stroke="#8793a8" stroke-width="0.4"/></g><path d="M16.8 293.1 L25.7 299.6 L16.8 306.1 Z" fill="url(#gtri)"/><rect x="10.2" y="313.8" width="13.8" height="12.6" fill="url(#gwin)" stroke="#9aa3b8" stroke-width="0.5"/><rect x="10.2" y="313.6" width="13.8" height="2.2" fill="#1f44a8"/><path d="M21.2 320.4 L25 324 L21.2 327.5 Z" fill="#fff" stroke="#30b030" stroke-width="0.9"/><path d="M16.8 335.2 L25.8 341.7 L16.8 348.2 Z" fill="url(#gtri)"/><rect x="10.2" y="341" width="7.8" height="8.6" fill="#fff" stroke="#8c8c8c" stroke-width="0.6"/><path d="M11.6 348.4 Q12 343.6 15.8 343.6" stroke="#1e4fb0" stroke-width="1.4" fill="none"/><path d="M14.8 342 L17 343.6 L14.8 345.4Z" fill="#1e4fb0"/><rect x="12.2" y="356.2" width="11.6" height="5" fill="#b4b4b4"/><rect x="14.6" y="356.6" width="6.8" height="4.4" fill="#cdcdcd"/><rect x="12.8" y="354" width="1.4" height="2.6" fill="#e2b040"/><rect x="21.8" y="354" width="1.4" height="2.6" fill="#e2b040"/><rect x="15" y="354" width="6" height="2.6" fill="#e8c060"/><path d="M14 361.2 H22 L19.2 369.6 H16.8 Z" fill="#a9a9a9"/><path d="M16 361.4 H20 L18.6 369 H17.4 Z" fill="#c4c4c4"/><path d="M18.2 375.3 Q13.2 375.5 13.3 380.5 Q13.5 383.5 16 386.2 L16.3 388 H20.2 L20.5 386.2 Q23.2 383.5 23.2 380.5 Q23.1 375.5 18.2 375.3 Z" fill="url(#gbulb)" stroke="#e2cf7a" stroke-width="0.4"/><rect x="16.2" y="388" width="4.2" height="3.6" rx="0.8" fill="#3d4a66"/><path d="M18.00 396.00 L19.38 397.27 L21.25 397.35 L21.33 399.22 L22.60 400.60 L21.33 401.98 L21.25 403.85 L19.38 403.93 L18.00 405.20 L16.62 403.93 L14.75 403.85 L14.67 401.98 L13.40 400.60 L14.67 399.22 L14.75 397.35 L16.62 397.27 Z" fill="#e4e4e4" stroke="#b0b0b0" stroke-width="0.5" stroke-linejoin="round"/><circle cx="18" cy="400.6" r="1.4" fill="#fff" stroke="#c8c8c8" stroke-width="0.4"/><g transform="rotate(12 13.6 408)"><rect x="10.6" y="403" width="6" height="8.8" rx="2.6" fill="#222"/><ellipse cx="13.6" cy="410" rx="1.8" ry="1.3" fill="#a8560c"/><path d="M11.8 404.5 Q13.5 403.6 15.2 404.4" stroke="#777" stroke-width="0.5" fill="none"/></g><g transform="rotate(-12 22.4 408)"><rect x="19.4" y="403" width="6" height="8.8" rx="2.6" fill="#222"/><ellipse cx="22.4" cy="410" rx="1.8" ry="1.3" fill="#a8560c"/><path d="M20.6 404.5 Q22.3 403.6 24 404.4" stroke="#777" stroke-width="0.5" fill="none"/></g><rect x="16" y="405.2" width="4" height="2.4" fill="#1a1a1a"/><path d="M11 419 H14 L14.8 420 H20.5 V426.4 H11 Z" fill="url(#gfold)" stroke="#c9a640" stroke-width="0.4"/><path d="M14 423.3 H17 L17.8 424.3 H23.8 V430.7 H14 Z" fill="url(#gfold)" stroke="#c9a640" stroke-width="0.4"/><path d="M11.2 438.8 H20.4 L22.8 441.2 V453.8 H11.2 Z" fill="#f2f5fc" stroke="#8d9ab8" stroke-width="0.6"/><path d="M13 443 H20.5 M13 445.5 H20.5 M13 448 H20.5 M13 450.5 H19" stroke="#9cb0dd" stroke-width="0.8"/><path d="M12.6 443 h1 M12.6 445.5 h1 M12.6 448 h1 M12.6 450.5 h1" stroke="#3a6fd0" stroke-width="0.9"/><path d="M20.0 447.0 L24.6 450.9 L20.0 454.8 Z" fill="#169e16"/><rect x="11" y="461" width="14.3" height="9" fill="#303030" stroke="#555" stroke-width="0.4"/><path d="M12.6 463.6 L14 464.6 L12.6 465.6 M14.6 466.4 H16" stroke="#c9c9c9" stroke-width="0.5" fill="none"/></svg>
</body></html>
